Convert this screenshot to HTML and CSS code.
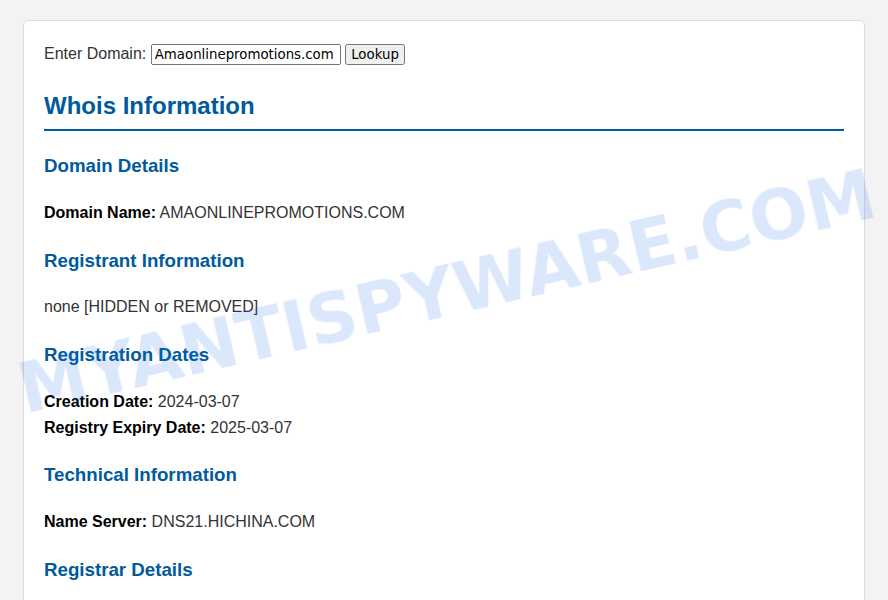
FILE: index.html
```html
<!DOCTYPE html>
<html lang="en">
<head>
    <meta charset="UTF-8">
    <meta name="viewport" content="width=device-width, initial-scale=1.0">
    <title>Whois Lookup</title>
    <link rel="stylesheet" href="styles.css">
</head>
<body>
    <div class="container">
        <div class="lookup">
            <label for="domain">Enter Domain:</label>
            <input type="text" id="domain" value="Amaonlinepromotions.com">
            <button>Lookup</button>
        </div>

        <h1>Whois Information</h1>

        <h2>Domain Details</h2>
        <div class="info">
            <strong>Domain Name:</strong> AMAONLINEPROMOTIONS.COM
        </div>

        <h2>Registrant Information</h2>
        <div class="info">none [HIDDEN or REMOVED]</div>

        <h2>Registration Dates</h2>
        <div class="info">
            <strong>Creation Date:</strong> 2024-03-07<br>
            <strong>Registry Expiry Date:</strong> 2025-03-07
        </div>

        <h2>Technical Information</h2>
        <div class="info">
            <strong>Name Server:</strong> DNS21.HICHINA.COM
        </div>

        <h2>Registrar Details</h2>
        <div class="info">
            <strong>Registrar:</strong> Alibaba Cloud Computing (Beijing) Co., Ltd.
        </div>
    </div>

    <div class="watermark">MYANTISPYWARE.COM</div>
</body>
</html>
```

FILE: styles.css
```css
body {
    font-family: 'Liberation Sans', Arial, sans-serif;
    font-size: 16px;
    line-height: 1.6;
    color: #333;
    background-color: #f3f3f3;
    margin: 0;
    padding: 20px;
}
.container {
    max-width: 800px;
    margin: 0 auto;
    padding: 20px;
    background-color: #fff;
    border: 1px solid #ddd;
    border-radius: 5px;
}
.lookup input,
.lookup button {
    font-family: 'DejaVu Sans', sans-serif;
    font-size: 13.33px;
}
.lookup input {
    box-sizing: border-box;
    width: 190px;
}
.lookup button {
    padding: 1px 4px;
}
h1 {
    color: #005a9c;
    font-size: 24px;
    margin: 20px 0 19px;
    padding-bottom: 4px;
    border-bottom: 2px solid #005a9c;
}
h2 {
    color: #005a9c;
    font-size: 18.72px;
    margin: 20px 0 19px;
}
.info strong {
    color: #000;
}
.watermark {
    position: absolute;
    left: 447px;
    top: 292px;
    transform: translate(-50%, -50%) rotate(-13deg);
    font-family: 'DejaVu Sans', sans-serif;
    font-weight: bold;
    font-size: 69px;
    line-height: 1;
    white-space: nowrap;
    color: rgba(15, 100, 235, 0.15);
    filter: blur(0.6px);
    pointer-events: none;
}
```
